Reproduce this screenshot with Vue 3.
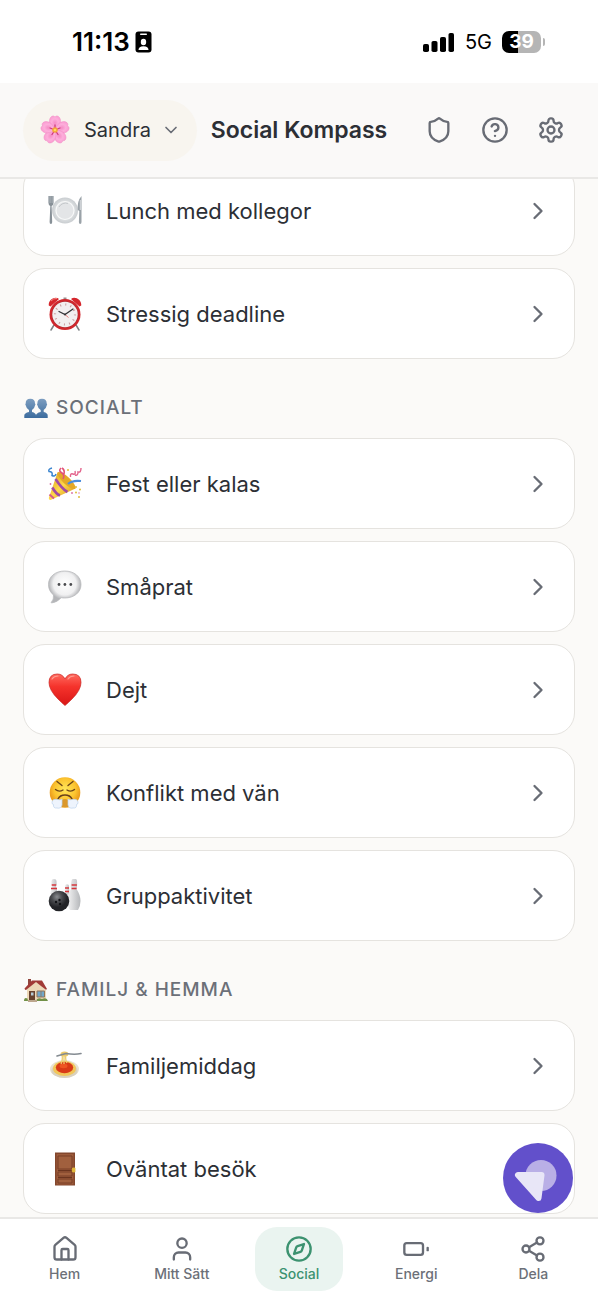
<template>
<div class="app">
    <!-- emoji artwork, referenced with <use> -->
    <svg class="sprite" aria-hidden="true">
        <defs>
            <radialGradient id="petal"><stop offset="0" stop-color="#f58cc4"/><stop offset="0.6" stop-color="#fdaedb"/><stop offset="1" stop-color="#fba0d3"/></radialGradient>
            <radialGradient id="plate"><stop offset="0" stop-color="#e6e8e9"/><stop offset="0.65" stop-color="#dfe2e4"/><stop offset="1" stop-color="#c9cdd0"/></radialGradient>
            <linearGradient id="cone" x1="0" y1="0" x2="1" y2="1"><stop offset="0" stop-color="#d89a1c"/><stop offset="0.5" stop-color="#ffd84a"/><stop offset="1" stop-color="#c98515"/></linearGradient>
            <radialGradient id="bubble" cx="0.5" cy="0.4"><stop offset="0" stop-color="#ffffff"/><stop offset="0.7" stop-color="#f0f0f1"/><stop offset="1" stop-color="#b4b5b8"/></radialGradient>
            <linearGradient id="love" x1="0" y1="0" x2="0" y2="1"><stop offset="0" stop-color="#ff6a5e"/><stop offset="0.4" stop-color="#f5332c"/><stop offset="1" stop-color="#d91616"/></linearGradient>
            <radialGradient id="face" cx="0.5" cy="0.4"><stop offset="0" stop-color="#ffe75a"/><stop offset="0.7" stop-color="#fcc42f"/><stop offset="1" stop-color="#eda01e"/></radialGradient>
            <radialGradient id="ball" cx="0.4" cy="0.3"><stop offset="0" stop-color="#8a8c90"/><stop offset="0.5" stop-color="#4a4b4f"/><stop offset="1" stop-color="#222327"/></radialGradient>
            <linearGradient id="pin"><stop offset="0" stop-color="#f6f6f6"/><stop offset="1" stop-color="#b5b7ba"/></linearGradient>
            <linearGradient id="people" x1="0" y1="0" x2="0" y2="1"><stop offset="0" stop-color="#7c9dc0"/><stop offset="1" stop-color="#3c6c9e"/></linearGradient>
        </defs>

        <symbol id="flower" viewBox="0 0 30 30">
            <g fill="url(#petal)" stroke="#f08cc4" stroke-width="0.5">
                <path id="flower-petal" d="M15 15C10 12 8 6 10.500 2.500C12 0.500 14 0.500 15 2C16 0.500 18 0.500 19.500 2.500C22 6 20 12 15 15Z"/>
                <use href="#flower-petal" transform="rotate(72 15 15)"/>
                <use href="#flower-petal" transform="rotate(144 15 15)"/>
                <use href="#flower-petal" transform="rotate(216 15 15)"/>
                <use href="#flower-petal" transform="rotate(288 15 15)"/>
            </g>
            <path d="M15 15v-5M15 15l5-2M15 15l3 4.500M15 15l-3 4.500M15 15l-5-2" stroke="#cf3a7c" stroke-width="1.300" stroke-linecap="round"/>
            <circle cx="15" cy="15" r="2.800" fill="#f3a63a"/>
            <circle cx="15" cy="15" r="1.300" fill="#ffd95c"/>
        </symbol>

        <symbol id="lunch" viewBox="0 0 34 34">
            <circle cx="17" cy="16.500" r="13" fill="url(#plate)"/>
            <circle cx="17" cy="16.500" r="9" fill="#e3e5e7" stroke="#f8f9f9" stroke-width="1.200"/>
            <path d="M11 13a7.500 7.500 0 0 1 9-3.500" fill="none" stroke="#c4c8cb"/>
            <path d="M0.500 2v7q0 2.500 1.800 3L1.600 28q0 2 1.300 2t1.300-2L3.600 12q1.900-0.500 1.900-3V2" fill="#879097"/>
            <path d="M1 2v7M2.900 2v7M4.900 2v7" stroke="#aeb6bb" stroke-width="0.900"/>
            <path d="M33.500 2v26q0 2-1.300 2t-1.300-2l0.400-11-1.500-1Q29 7 33.500 2Z" fill="#9aa2a8"/>
            <path d="M32.300 6v10" stroke="#dadee0"/>
        </symbol>

        <symbol id="clock" viewBox="0 0 34 34">
            <path d="M6 28l-3 5M28 28l3 5" stroke="#7d7f83" stroke-width="1.500" stroke-linecap="round"/>
            <path d="M15.500 0.500h3v4h-3z" fill="#9b8e8e"/>
            <path d="M0.800 8.500C0 3 7-1.500 11 2L2.500 9.500ZM33.200 8.500C34 3 27-1.500 23 2l8.500 7.500Z" fill="#d5262c"/>
            <path d="M3 4q2.500-3 6-2.500" stroke="#f58681" stroke-width="1" fill="none"/>
            <circle cx="17" cy="17.500" r="15.500" fill="#d0272d"/>
            <circle cx="17" cy="17.500" r="13.200" fill="#a92a30"/>
            <circle cx="17" cy="17.500" r="12.700" fill="#f2eff0"/>
            <circle cx="17" cy="17.500" r="10" fill="none" stroke="#c99a9c" stroke-width="2.200" stroke-dasharray="1 4.236"/>
            <path d="M11 14.500l6 3L25 12" fill="none" stroke="#303236" stroke-width="1.300" stroke-linecap="round"/>
            <path d="M17 17.500l3.500 3" stroke="#d33" stroke-width="0.600"/>
            <circle cx="17" cy="17.500" r="1" fill="#303236"/>
        </symbol>

        <symbol id="party" viewBox="0 0 34 34">
            <path d="M9.500 5.500L0.800 31q-0.300 2 1.800 2L27.500 21.500Z" fill="url(#cone)"/>
            <ellipse cx="18.500" cy="13.500" rx="3.600" ry="12" transform="rotate(-47 18.500 13.500)" fill="#e4a827"/>
            <path d="M7.500 12Q14 22 19.500 25M4.300 20.500Q8 27 12 28.500" fill="none" stroke="#a04aa6" stroke-width="2.600"/>
            <path d="M1.500 27.500L6 31.500" stroke="#d45a90" stroke-width="2"/>
            <path d="M4 1Q0 2 1 4.500q4 0 3 4 3 1.500 4-1.500" fill="none" stroke="#3b85cf" stroke-width="1.500"/>
            <path d="M13 1q-3 3 1 5 3 2 1 6M14 1q3 2 2 6" fill="none" stroke="#e25378" stroke-width="1.600"/>
            <path d="M22.500 10Q22 6 25 7t2-3M27 8q3 1 3-3 3 1 3-4" fill="none" stroke="#e3648c" stroke-width="1.400"/>
            <path d="M20 17Q24 13 33 14" fill="none" stroke="#4a8ddd" stroke-width="2.200"/>
            <g fill="#dfbd3d"><circle cx="28" cy="20" r="1"/><circle cx="32" cy="22.500" r="1"/><circle cx="28" cy="25.500" r="1"/><circle cx="31" cy="30" r="1"/><circle cx="20" cy="3" r="1"/></g>
            <g fill="#d86ba5"><circle cx="24" cy="26" r="0.900"/><circle cx="2.500" cy="17" r="0.900"/><circle cx="31" cy="26" r="0.700"/></g>
        </symbol>

        <symbol id="speech" viewBox="0 0 34 34">
            <path d="M16.700 1C26 1 33 6.500 33 14.500S26 28 16.700 28q-1.800 0-3.500-0.300Q9 32.500 3.500 33q-0.500-0.500 0-1 2.500-2.500 2-7Q0.500 21 0.500 14.500C0.500 6.500 7.500 1 16.700 1Z" fill="url(#bubble)" stroke="#b9babd" stroke-width="0.800"/>
            <g fill="#4a4b4e"><circle cx="11" cy="14.500" r="1.400"/><circle cx="16.900" cy="14.500" r="1.400"/><circle cx="22.800" cy="14.500" r="1.400"/></g>
        </symbol>

        <symbol id="heart" viewBox="0 0 34 34">
            <path d="M17 32.500Q14 30 10 26Q1 17 1 9.500Q1 1 9.300 1Q14.500 1 17 6Q19.500 1 24.700 1Q33 1 33 9.500Q33 17 24 26Q20 30 17 32.500Z" fill="url(#love)" stroke="#c9221f" stroke-width="0.700"/>
            <path d="M4 6q2-3 6-3M20 6q2-3 6-3" stroke="#ff9b90" stroke-width="1.200" fill="none" stroke-linecap="round"/>
        </symbol>

        <symbol id="huff" viewBox="0 0 34 34">
            <circle cx="17" cy="16.500" r="15.300" fill="url(#face)"/>
            <path d="M9 5.500l5 4M25 5.500l-5 4M7.500 13.500q3.500 3 7.500 0.500M26.500 13.500q-3.500 3-7.500 0.500" stroke="#6c4518" stroke-width="1.400" fill="none" stroke-linecap="round"/>
            <path d="M10 23q2-4 7-4t7 4" fill="none" stroke="#69411a" stroke-width="1.600" stroke-linecap="round"/>
            <path d="M14 24q3-2 6 0v7h-6z" fill="#db982c"/>
            <path d="M14 23q-2 1.500-4 0.500-6-1-6 3 0 2 1.500 2-0.500 4 3.500 3.500 4 1 5-3ZM20 23q2 1.500 4 0.500 6-1 6 3 0 2-1.500 2 0.500 4-3.500 3.500-4 1-5-3Z" fill="#eef4fd" stroke="#bdd2ec" stroke-width="0.700"/>
        </symbol>

        <symbol id="bowling" viewBox="0 0 34 34">
            <path d="M3.500 2q0-2 2.500-2t2.500 2q0.500 3-0.500 5l2 8H2l2-8Q3 5 3.500 2Z" fill="url(#pin)"/>
            <path d="M17 7q0-1.800 2-1.800T21 7l0.500 9h-5Z" fill="url(#pin)"/>
            <path d="M23.500 2q0-2.300 2.800-2.300T29 2q0.500 5-0.500 8 4 6 4 12 0 5-2.500 9h-8q-3-4-3-9 0-6 4-12-0.500-4 0.500-8Z" fill="url(#pin)"/>
            <path d="M3.700 6h4.600M3 9.500h6M17 9h4M17 12.500h4M23.600 6h5.300M23.600 9.500h5" stroke="#d6373c" stroke-width="1.500"/>
            <circle cx="11" cy="22" r="10.300" fill="url(#ball)"/>
            <g fill="#111215"><circle cx="8" cy="23" r="1.200"/><circle cx="11.500" cy="21" r="1.200"/><circle cx="12" cy="25" r="1.200"/></g>
        </symbol>

        <symbol id="spaghetti" viewBox="0 0 34 34">
            <ellipse cx="16.500" cy="20" rx="14.500" ry="9" fill="#e9e2d2"/>
            <ellipse cx="16.500" cy="21.500" rx="13" ry="7.500" fill="#d9d1bf"/>
            <ellipse cx="16.500" cy="19.500" rx="11.500" ry="7.500" fill="#f1c65a"/>
            <ellipse cx="16.500" cy="18.500" rx="8.700" ry="5.800" fill="#d93a17"/>
            <ellipse cx="15.500" cy="17" rx="4" ry="2.200" fill="#ee5522"/>
            <path d="M14 5q1 6-1 10M16 5v10M18 5q-1 6 1 9" fill="none" stroke="#eccc6d" stroke-width="1.300"/>
            <ellipse cx="16.500" cy="5" rx="4" ry="2.500" fill="#edca69"/>
            <path d="M9 7L18 4.500M18 4.500Q27 6 33 4.500" fill="none" stroke="#848b91" stroke-width="1.600" stroke-linecap="round"/>
        </symbol>

        <symbol id="door" viewBox="0 0 34 34">
            <path d="M7 0.500h20v33H7z" fill="#83472d"/>
            <path d="M8.500 2h17v30.500h-17z" fill="#9c5b3b"/>
            <path d="M10 4h14v13H10zM10 20h14v4H10zM10 27h14v4H10z" fill="#a1603e" stroke="#793e26" stroke-width="1"/>
            <path d="M10 18.500h14M10 25.500h14" stroke="#6b351f" stroke-width="1"/>
            <path d="M24.500 16H27v4h-2.500zM23.500 18H27" fill="#e2b83b" stroke="#e2b83b" stroke-width="0.800"/>
        </symbol>

        <symbol id="friends" viewBox="0 0 24 24">
            <g fill="url(#people)">
                <path id="person" d="M0.300 22v-2.500q0-2.500 4.700-3.500v-2Q2.300 12.500 1.800 9.500 0.800 8 1.700 7.500 1.500 2.800 6.300 2.800T11 7.500q1 0.500 0 2Q10.500 12.500 8 14v2q4 1 4 3.500V22Z"/>
                <use href="#person" transform="translate(11.700 0)"/>
            </g>
        </symbol>

        <symbol id="house" viewBox="0 0 24 24">
            <path d="M4 1h3v7H4z" fill="#91453d"/>
            <path d="M3 10.500L10 4h8l4 8v10H3z" fill="#edd8b8"/>
            <path d="M0.500 10.500L8 2.500h10l5 8.500q-1 1-2 0l-4-3-5-4L2 12q-1 0-1.500-1.500Z" fill="#a13a37"/>
            <path d="M5 13h6v10H5z" fill="#68432f"/>
            <path d="M7 14.500h2.500v3H7z" fill="#b5ccd8"/>
            <path d="M13 13h7.500v6H13z" fill="#71a8cb" stroke="#8f755c"/>
            <path d="M17 13v6" stroke="#8f755c" stroke-width="0.800"/>
            <path d="M0 23q0-4 3.500-2.500L4 23ZM12 23q1-4 6-2 5-2 6 2Z" fill="#719047"/>
            <path d="M4 22h9v2H4z" fill="#bda78e"/>
        </symbol>
    </svg>

    <div class="status">
        <div class="status-left">
            <span class="time">11:13</span>
            <svg class="badge" viewBox="0 0 17 22">
                <rect x="0.500" y="0.500" width="16" height="21" rx="3" fill="#000"/>
                <rect x="5" y="2.500" width="7" height="1.500" rx="0.700" fill="#fff"/>
                <ellipse cx="8.500" cy="11" rx="2.700" ry="3.200" fill="#fff"/>
                <path d="M3.500 19q0-3.500 5-3.800 5 0.300 5 3.800Z" fill="#fff"/>
            </svg>
        </div>
        <div class="status-right">
            <svg class="signal" viewBox="0 0 32 20">
                <rect x="0" y="12" width="6" height="8" rx="1.800"/>
                <rect x="8.500" y="9" width="6" height="11" rx="1.800"/>
                <rect x="17" y="5" width="6" height="15" rx="1.800"/>
                <rect x="25.500" y="1" width="5.500" height="19" rx="1.800"/>
            </svg>
            <span class="network">5G</span>
            <div class="battery"><span>39</span></div>
        </div>
    </div>

    <header class="topbar">
        <button class="profile">
            <svg class="avatar"><use href="#flower"/></svg>
            <span>Sandra</span>
            <svg class="icon caret" viewBox="0 0 24 24"><path d="m6 9 6 6 6-6"/></svg>
        </button>
        <h1>Social Kompass</h1>
        <div class="actions">
            <button v-for="a in actions" :key="a.label" :aria-label="a.label">
                <svg class="icon" viewBox="0 0 24 24"><path v-for="d in a.paths" :key="d" :d="d"/></svg>
            </button>
        </div>
    </header>

    <main>
        <section v-for="s in sections" :key="s.title">
            <h2 v-if="s.title !== 'Jobb'"><svg><use :href="'#' + s.icon"/></svg>{{ s.title }}</h2>
            <button v-for="item in s.items" :key="item.name" class="card">
                <svg class="emoji"><use :href="'#' + item.icon"/></svg>
                <span>{{ item.name }}</span>
                <svg class="icon" viewBox="0 0 24 24"><path d="m9 18 6-6-6-6"/></svg>
            </button>
        </section>
    </main>

    <nav>
        <button class="fab" aria-label="Assistent">
            <svg viewBox="0 0 70 70">
                <circle cx="38" cy="32.500" r="15.500" fill="#b9afe6"/>
                <path d="M15 32L38.500 32L35.500 55Z" fill="#e8e6f7" stroke="#e8e6f7" stroke-width="6" stroke-linejoin="round"/>
            </svg>
        </button>
        <a v-for="t in tabs" :key="t.label" href="#" :class="{ active: t.label === current }" @click.prevent="current = t.label">
            <svg class="icon" viewBox="0 0 24 24"><path v-for="d in t.paths" :key="d" :d="d"/></svg>
            <span>{{ t.label }}</span>
        </a>
    </nav>
</div>
</template>

<script setup>
    import { ref } from 'vue';

    const current = ref('Social');

    const actions = [
        { label: 'Integritet', paths: ['M20 13c0 5-3.500 7.500-7.660 8.950a1 1 0 0 1-.67-.01C7.500 20.500 4 18 4 13V6a1 1 0 0 1 1-1c2 0 4.500-1.200 6.240-2.720a1.170 1.170 0 0 1 1.520 0C14.510 3.810 17 5 19 5a1 1 0 0 1 1 1z'] },
        { label: 'Hjälp', paths: ['M22 12a10 10 0 1 1-20 0 10 10 0 0 1 20 0z', 'M9.090 9a3 3 0 0 1 5.830 1c0 2-3 3-3 3', 'M12 17h.01'] },
        { label: 'Inställningar', paths: [
            'M12.220 2h-.44a2 2 0 0 0-2 2v.18a2 2 0 0 1-1 1.730l-.43.25a2 2 0 0 1-2 0l-.15-.08a2 2 0 0 0-2.730.73l-.22.38a2 2 0 0 0 .73 2.730l.15.1a2 2 0 0 1 1 1.720v.51a2 2 0 0 1-1 1.740l-.15.09a2 2 0 0 0-.73 2.730l.22.38a2 2 0 0 0 2.730.73l.15-.08a2 2 0 0 1 2 0l.43.25a2 2 0 0 1 1 1.730V20a2 2 0 0 0 2 2h.44a2 2 0 0 0 2-2v-.18a2 2 0 0 1 1-1.730l.43-.25a2 2 0 0 1 2 0l.15.08a2 2 0 0 0 2.730-.73l.22-.39a2 2 0 0 0-.73-2.730l-.15-.08a2 2 0 0 1-1-1.740v-.5a2 2 0 0 1 1-1.740l.15-.09a2 2 0 0 0 .73-2.730l-.22-.38a2 2 0 0 0-2.730-.73l-.15.08a2 2 0 0 1-2 0l-.43-.25a2 2 0 0 1-1-1.730V4a2 2 0 0 0-2-2z',
            'M15 12a3 3 0 1 1-6 0 3 3 0 0 1 6 0z'] },
    ];

    const sections = [
        { title: 'Jobb', items: [
            { icon: 'lunch', name: 'Lunch med kollegor' },
            { icon: 'clock', name: 'Stressig deadline' },
        ] },
        { title: 'Socialt', icon: 'friends', items: [
            { icon: 'party', name: 'Fest eller kalas' },
            { icon: 'speech', name: 'Småprat' },
            { icon: 'heart', name: 'Dejt' },
            { icon: 'huff', name: 'Konflikt med vän' },
            { icon: 'bowling', name: 'Gruppaktivitet' },
        ] },
        { title: 'Familj & hemma', icon: 'house', items: [
            { icon: 'spaghetti', name: 'Familjemiddag' },
            { icon: 'door', name: 'Oväntat besök' },
        ] },
    ];

    const tabs = [
        { label: 'Hem', paths: ['M15 21v-8a1 1 0 0 0-1-1h-4a1 1 0 0 0-1 1v8', 'M3 10a2 2 0 0 1 .71-1.530l7-6a2 2 0 0 1 2.580 0l7 6A2 2 0 0 1 21 10v9a2 2 0 0 1-2 2H5a2 2 0 0 1-2-2z'] },
        { label: 'Mitt Sätt', paths: ['M19 21v-2a4 4 0 0 0-4-4H9a4 4 0 0 0-4 4v2', 'M16 7a4 4 0 1 1-8 0 4 4 0 0 1 8 0z'] },
        { label: 'Social', paths: ['M22 12a10 10 0 1 1-20 0 10 10 0 0 1 20 0z', 'm16.240 7.760-1.800 5.410a2 2 0 0 1-1.270 1.270L7.760 16.240l1.800-5.410a2 2 0 0 1 1.270-1.270z'] },
        { label: 'Energi', paths: ['M4 7h12a2 2 0 0 1 2 2v6a2 2 0 0 1-2 2H4a2 2 0 0 1-2-2V9a2 2 0 0 1 2-2z', 'M22 11v2'] },
        { label: 'Dela', paths: ['M21 5a3 3 0 1 1-6 0 3 3 0 0 1 6 0z', 'M9 12a3 3 0 1 1-6 0 3 3 0 0 1 6 0z', 'M21 19a3 3 0 1 1-6 0 3 3 0 0 1 6 0z', 'M8.590 13.510l6.830 3.980', 'M15.410 6.510l-6.820 3.980'] },
    ];
</script>

<style>
body {
    background: #fbfaf8;
}
</style>

<style scoped>
.app {
    display: flex;
    flex-direction: column;
    height: 100vh;
    font-family: Inter, "Liberation Sans", sans-serif;
    color: #2c2f35;
}

.sprite {
    position: absolute;
    width: 0;
    height: 0;
}

button {
    font: inherit;
    color: inherit;
    border: 0;
    padding: 0;
    background: none;
    cursor: pointer;
}

.icon {
    width: 28px;
    height: 28px;
    flex: none;
    fill: none;
    stroke: #686c75;
    stroke-width: 2;
    stroke-linecap: round;
    stroke-linejoin: round;
}

.status {
    display: flex;
    justify-content: space-between;
    align-items: center;
    flex: none;
    box-sizing: border-box;
    height: 83px;
    padding: 0 57px 0 72px;
    background: #fff;
    color: #000;
}

.status-left,
.status-right {
    display: flex;
    align-items: center;
}

.status-left {
    gap: 5px;
}

.status-right {
    gap: 10px;
}

.time {
    font-size: 26px;
    font-weight: 600;
}

.badge {
    width: 17px;
    height: 22px;
}

.signal {
    width: 32px;
    height: 20px;
}

.network {
    font-size: 20px;
}

.battery {
    position: relative;
    width: 39px;
    height: 22px;
    border-radius: 7px;
    background: linear-gradient(90deg, #000 40%, #b5b5b5 40%);
    color: #fff;
    font-size: 19px;
    font-weight: 700;
    line-height: 22px;
    text-align: center;
}

.battery::after {
    content: "";
    position: absolute;
    left: 41px;
    top: 7px;
    width: 2px;
    height: 8px;
    border-radius: 0 2px 2px 0;
    background: #b5b5b5;
}

.topbar {
    display: grid;
    grid-template-columns: 1fr auto 1fr;
    align-items: center;
    flex: none;
    box-sizing: border-box;
    height: 96px;
    padding: 0 23px;
    border-bottom: 2px solid #e9e8e6;
    background: #faf9f8;
    z-index: 1;
}

.profile {
    display: flex;
    align-items: center;
    justify-self: start;
    height: 61px;
    padding: 0 16px;
    border-radius: 31px;
    background: #f8f5ef;
    font-size: 20px;
}

.avatar {
    width: 32px;
    height: 30px;
    margin-right: 13px;
}

.caret {
    width: 20px;
    height: 20px;
    margin-left: 10px;
}

h1 {
    margin: 0;
    font-size: 23px;
    font-weight: 600;
    white-space: nowrap;
}

.actions {
    display: flex;
    justify-content: flex-end;
    gap: 16px;
    margin-right: 4px;
}

.actions button {
    display: flex;
    align-items: center;
    justify-content: center;
    width: 40px;
    height: 40px;
}

/* the list is scrolled a little way under the top bar */
main {
    flex: 1;
    min-height: 0;
    overflow: hidden;
    padding: 0 23px;
}

section {
    display: flex;
    flex-direction: column;
    gap: 12px;
}

section:first-child {
    margin-top: -14px;
}

h2 {
    display: flex;
    align-items: center;
    gap: 8px;
    margin: 36px 0 6px;
    padding-left: 1px;
    font-size: 19px;
    line-height: 25px;
    font-weight: 500;
    letter-spacing: 1px;
    text-transform: uppercase;
    color: #6c7078;
}

h2 svg {
    width: 24px;
    height: 24px;
}

.card {
    display: flex;
    align-items: center;
    gap: 24px;
    box-sizing: border-box;
    height: 91px;
    padding: 0 22px 0 24px;
    border: 1px solid #e5e3df;
    border-radius: 22px;
    background: #fff;
    font-size: 22px;
    text-align: left;
}

.card span {
    flex: 1;
}

.emoji {
    width: 34px;
    height: 34px;
}

nav {
    position: relative;
    display: flex;
    flex: none;
    box-sizing: border-box;
    height: 83px;
    padding: 8px 6px 0;
    border-top: 2px solid #e9e8e6;
    background: #fff;
}

nav a {
    display: flex;
    flex: 1;
    flex-direction: column;
    align-items: center;
    justify-content: center;
    gap: 3px;
    box-sizing: border-box;
    height: 64px;
    margin: 0 15px;
    padding-bottom: 1px;
    border-radius: 22px;
    font-size: 14px;
    line-height: 16px;
    color: #6c7078;
    font-weight: 500;
    text-decoration: none;
    white-space: nowrap;
}

nav .active {
    background: #eaf4f0;
    color: #3c9270;
}

nav .active .icon {
    stroke: #3c9270;
}

.fab {
    position: absolute;
    right: 25px;
    bottom: 87px;
    width: 70px;
    height: 70px;
    border-radius: 50%;
    background: #6250cb;
    z-index: 2;
}

.fab svg {
    display: block;
}
</style>
